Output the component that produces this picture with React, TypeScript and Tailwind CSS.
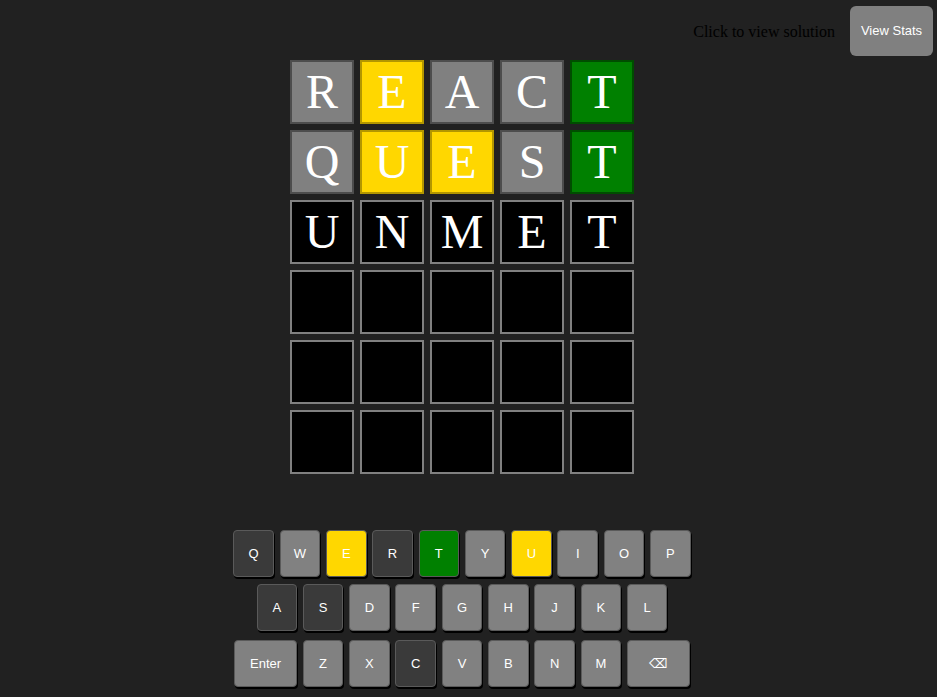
import React from "react";

type Mark = "absent" | "present" | "correct" | "empty";

const tileColors: Record<Mark, string> = {
  absent: "bg-[#808080] border-black/40",
  present: "bg-[#ffd700] border-black/30",
  correct: "bg-[#008000] border-black/40",
  empty: "bg-black border-[#808080]",
};

const board: { letter: string; mark: Mark }[][] = [
  [
    { letter: "R", mark: "absent" },
    { letter: "E", mark: "present" },
    { letter: "A", mark: "absent" },
    { letter: "C", mark: "absent" },
    { letter: "T", mark: "correct" },
  ],
  [
    { letter: "Q", mark: "absent" },
    { letter: "U", mark: "present" },
    { letter: "E", mark: "present" },
    { letter: "S", mark: "absent" },
    { letter: "T", mark: "correct" },
  ],
  ["U", "N", "M", "E", "T"].map((letter) => ({ letter, mark: "empty" as Mark })),
  ...Array.from({ length: 3 }, () =>
    Array.from({ length: 5 }, () => ({ letter: "", mark: "empty" as Mark })),
  ),
];

type KeyState = "used" | "present" | "correct" | "unused";

const keyColors: Record<KeyState, string> = {
  used: "bg-[#3a3a3a]",
  present: "bg-[#ffd700]",
  correct: "bg-[#008000]",
  unused: "bg-[#818181]",
};

const keyState: Record<string, KeyState> = {
  Q: "used",
  R: "used",
  A: "used",
  S: "used",
  C: "used",
  E: "present",
  U: "present",
  T: "correct",
};

const rows = [
  ["Q", "W", "E", "R", "T", "Y", "U", "I", "O", "P"],
  ["A", "S", "D", "F", "G", "H", "J", "K", "L"],
  ["Enter", "Z", "X", "C", "V", "B", "N", "M", "⌫"],
];

const Key = ({ label }: { label: string }) => {
  const wide = label === "Enter" || label === "⌫";
  const state = keyState[label] ?? "unused";
  return (
    <button
      className={`${keyColors[state]} ${
        wide ? "w-[63px]" : "w-[40.5px]"
      } h-[47px] rounded-[4px] border border-[#5a5a5a] shadow-[1px_2px_0_#000] text-white text-[13px] flex items-center justify-center`}
      style={{ fontFamily: label === "⌫" ? '"DejaVu Sans", sans-serif' : undefined }}
    >
      {label}
    </button>
  );
};

export default function App() {
  return (
    <div
      className="min-h-[697px] bg-[#212121] pb-[10px]"
      style={{ fontFamily: '"Liberation Sans", Arial, sans-serif' }}
    >
      {/* header */}
      <div className="flex justify-end items-center gap-[15px] pt-[6px] pr-[4px] h-[50px] box-content">
        <span className="text-black text-[16px] pt-[1px] font-['Liberation_Serif',serif]">
          Click to view solution
        </span>
        <button className="w-[83px] h-[50px] rounded-[6px] bg-[#808080] text-white text-[13px]">
          View Stats
        </button>
      </div>

      <div className="w-[924px] flex flex-col items-center">
        {/* board */}
        <div className="mt-[4px] flex flex-col gap-[6px]">
          {board.map((row, r) => (
            <div key={r} className="flex gap-[6px]">
              {row.map((tile, c) => (
                <div
                  key={c}
                  className={`${tileColors[tile.mark]} w-[64px] h-[64px] border-2 flex items-center justify-center text-white text-[48px] leading-none font-['Liberation_Serif',serif]`}
                >
                  {tile.letter}
                </div>
              ))}
            </div>
          ))}
        </div>

        {/* keyboard */}
        <div className="mt-[56px] flex flex-col items-center gap-[7px]">
          {rows.map((row, i) => (
            <div key={i} className={`flex gap-[5.8px] ${i === 2 ? "mt-[2px]" : ""}`}>
              {row.map((k) => (
                <Key key={k} label={k} />
              ))}
            </div>
          ))}
        </div>
      </div>
    </div>
  );
}
